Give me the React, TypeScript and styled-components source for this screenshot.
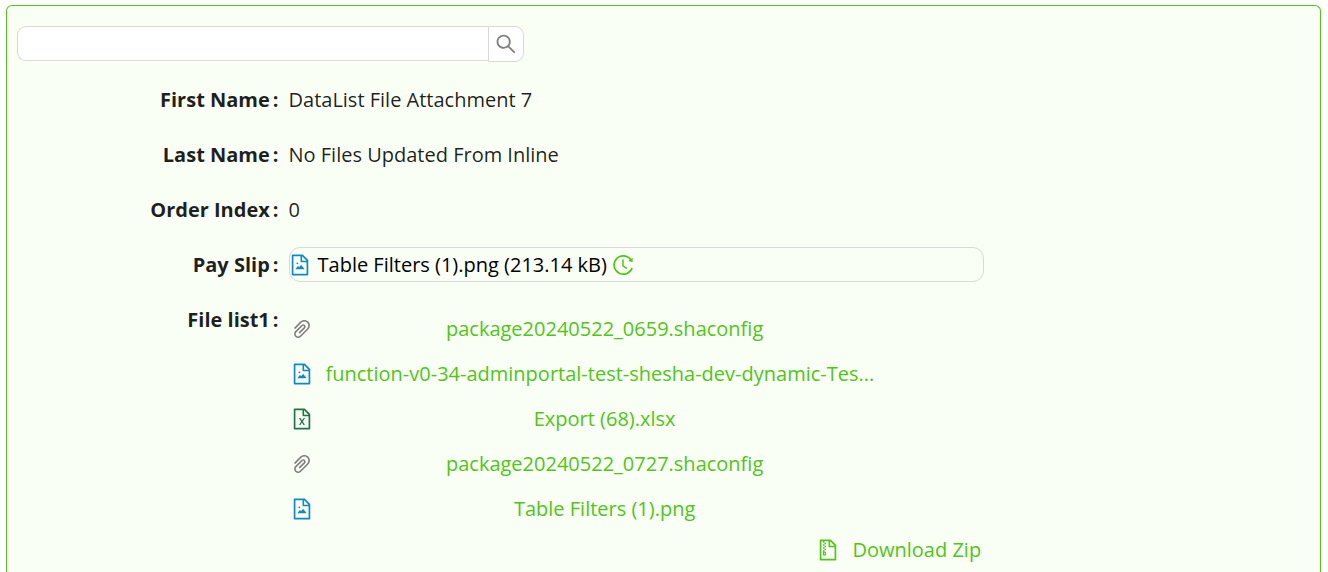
import React from 'react';
import styled, { createGlobalStyle } from 'styled-components';
import {
  AiOutlineFileExcel,
  AiOutlineFileImage,
  AiOutlineFileZip,
  AiOutlineHistory,
  AiOutlinePaperClip,
  AiOutlineSearch,
} from 'react-icons/ai';

const GlobalStyle = createGlobalStyle`
  *, *::before, *::after { box-sizing: border-box; }
  body {
    margin: 0;
    background: #fff;
    color: rgba(0, 0, 0, 0.88);
    font-family: "Segoe UI", "Open Sans", "Noto Sans", sans-serif;
    font-size: 20px;
    line-height: 35px;
  }
`;

const Panel = styled.main`
  margin: 5px 7px 0 6px;
  padding: 20px 10px 12px;
  min-height: calc(100vh - 5px);
  border: 1px solid #52c41a;
  border-bottom: 0;
  border-radius: 6px 6px 0 0;
  background: #f9fff5;
`;

const SearchBar = styled.form`
  display: flex;
  width: 39.2%;
  min-width: 280px;
  height: 36px;
  margin-bottom: 20px;
`;

const SearchInput = styled.input`
  flex: 1;
  min-width: 0;
  height: 35px;
  padding: 0 16px;
  border: 1px solid #d9d9d9;
  border-right: 0;
  border-radius: 9px 0 0 9px;
  background: #fff;
  font: inherit;
  outline: none;
`;

const SearchButton = styled.button`
  display: flex;
  align-items: center;
  justify-content: center;
  width: 36px;
  height: 36px;
  padding: 0;
  border: 1px solid #d9d9d9;
  border-radius: 0 9px 9px 0;
  background: #fff;
  color: #7f7f7f;
  font-size: 24px;
  cursor: pointer;

  svg {
    flex: none;
  }
`;

const Fields = styled.dl`
  display: flex;
  flex-direction: column;
  gap: 20px;
  margin: 0;
`;

const Field = styled.div`
  display: flex;
  align-items: flex-start;
`;

const Label = styled.dt`
  flex: 0 0 21%;
  padding-right: 10px;
  text-align: right;
  font-weight: 700;
`;

const Colon = styled.span`
  margin-left: 3px;
`;

const Value = styled.dd`
  flex: 0 0 53.8%;
  min-width: 0;
  margin: 0;
`;

const FileBox = styled.div`
  display: flex;
  align-items: center;
  gap: 4px;
  height: 35px;
  border: 1px solid #d9d9d9;
  border-radius: 11px;
  color: #000;
`;

const FileName = styled.span`
  padding-left: 4px;
`;

const IconButton = styled.button`
  display: flex;
  padding: 0;
  border: 0;
  background: none;
  color: #52c41a;
  font-size: 24px;
  cursor: pointer;
`;

const FileIcon = styled.span<{ $color: string }>`
  display: flex;
  flex: none;
  justify-content: center;
  width: 20px;
  color: ${(p) => p.$color};
  font-size: 24px;

  svg {
    flex: none;
  }
`;

const FileList = styled.ul`
  display: flex;
  flex-direction: column;
  gap: 10px;
  margin: 0;
  padding: 9px 0 0 3px;
  list-style: none;
`;

const FileItem = styled.li`
  display: flex;
  align-items: center;
  gap: 14px;
  width: 85.5%;
`;

const FileLink = styled.a<{ $long?: boolean }>`
  flex: 1;
  min-width: 0;
  overflow: hidden;
  color: #52c41a;
  text-align: ${(p) => (p.$long ? 'left' : 'center')};
  text-decoration: none;
  text-overflow: ellipsis;
  white-space: nowrap;
`;

const Actions = styled.div`
  display: flex;
  justify-content: flex-end;
  padding: 6px 3px 0 0;
`;

const DownloadButton = styled.button`
  display: flex;
  align-items: center;
  gap: 14px;
  padding: 0;
  border: 0;
  background: none;
  color: #52c41a;
  font: inherit;
  cursor: pointer;
`;

const blue = '#1089c3';

type Kind = 'other' | 'image' | 'excel';

const kinds: Record<Kind, { color: string; icon: React.ReactNode }> = {
  other: { color: '#808080', icon: <AiOutlinePaperClip /> },
  image: { color: blue, icon: <AiOutlineFileImage /> },
  excel: { color: '#217346', icon: <AiOutlineFileExcel /> },
};

const files: { name: string; kind: Kind; long?: boolean }[] = [
  { name: 'package20240522_0659.shaconfig', kind: 'other' },
  { name: 'function-v0-34-adminportal-test-shesha-dev-dynamic-Tes...', kind: 'image', long: true },
  { name: 'Export (68).xlsx', kind: 'excel' },
  { name: 'package20240522_0727.shaconfig', kind: 'other' },
  { name: 'Table Filters (1).png', kind: 'image' },
];

function FormField({ label, children }: { label: string; children: React.ReactNode }) {
  return (
    <Field>
      <Label>
        {label}
        <Colon>:</Colon>
      </Label>
      <Value>{children}</Value>
    </Field>
  );
}

export default function App() {
  return (
    <>
      <GlobalStyle />
      <Panel>
        <SearchBar role="search" onSubmit={(e) => e.preventDefault()}>
          <SearchInput type="text" aria-label="Search" />
          <SearchButton type="submit" aria-label="Search">
            <AiOutlineSearch />
          </SearchButton>
        </SearchBar>
        <Fields>
          <FormField label="First Name">DataList File Attachment 7</FormField>
          <FormField label="Last Name">No Files Updated From Inline</FormField>
          <FormField label="Order Index">0</FormField>
          <FormField label="Pay Slip">
            <FileBox>
              <FileIcon $color={blue}>
                <AiOutlineFileImage />
              </FileIcon>
              <FileName>Table Filters (1).png (213.14 kB)</FileName>
              <IconButton type="button" aria-label="Version history">
                <AiOutlineHistory />
              </IconButton>
            </FileBox>
          </FormField>
          <FormField label="File list1">
            <FileList>
              {files.map((file) => (
                <FileItem key={file.name}>
                  <FileIcon $color={kinds[file.kind].color}>{kinds[file.kind].icon}</FileIcon>
                  <FileLink href="#" $long={file.long}>
                    {file.name}
                  </FileLink>
                </FileItem>
              ))}
            </FileList>
            <Actions>
              <DownloadButton type="button">
                <FileIcon $color="#52c41a">
                  <AiOutlineFileZip />
                </FileIcon>
                Download Zip
              </DownloadButton>
            </Actions>
          </FormField>
        </Fields>
      </Panel>
    </>
  );
}
